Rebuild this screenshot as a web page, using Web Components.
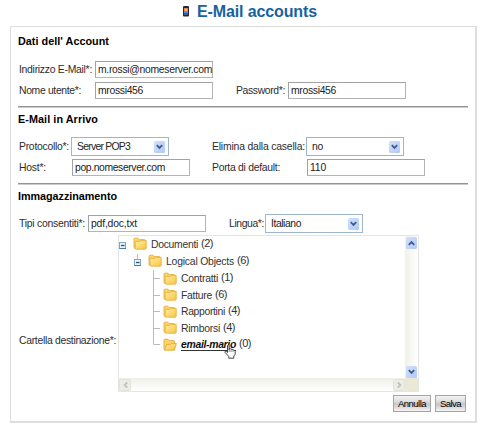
<!DOCTYPE html>
<html lang="it">
<head>
<meta charset="utf-8">
<title>E-Mail accounts</title>
<style>
html,body{margin:0;background:#fff}
body{width:499px;height:436px;overflow:hidden;font:10.4px/15px "Liberation Sans",Arial,sans-serif;color:#2c2c2c}
</style>
</head>
<body>
<mail-accounts></mail-accounts>
<script>
const define = (name, html, ready) => {
  const t = document.createElement('template');
  t.innerHTML = html;
  customElements.define(name, class extends HTMLElement {
    constructor() {
      super();
      this.attachShadow({mode: 'open'}).append(t.content.cloneNode(true));
    }
    connectedCallback() { if (ready) ready(this, this.shadowRoot); }
  });
};

/* A run of text whose tracking is adjusted so it spans "w" pixels. */
define('fit-text', `<style>:host{display:inline-block;white-space:pre}span{display:inline-block}</style><span><slot></slot></span>`,
  (el, root) => {
    const w = +el.getAttribute('w');
    const s = root.querySelector('span');
    s.style.letterSpacing = '0';
    const n = el.textContent.length;
    const gap = (w - s.getBoundingClientRect().width) / n;
    s.style.letterSpacing = gap.toFixed(3) + 'px';
  });

define('text-field', `<style>
:host{display:block;box-sizing:border-box;width:118px;height:17px;border:1px solid #b4b4b4;border-top-color:#a2a2a2;border-left-color:#a2a2a2;padding-left:2px;line-height:16px;background:#fff;color:#222;white-space:nowrap}
</style><slot></slot>`);

define('arrow-box', `<style>
:host{display:grid;place-items:center;box-sizing:border-box;width:11px;height:12px;border-radius:1.5px;background:linear-gradient(135deg,#d3e0fc,#b2c8f6);--ink:#3b5c8c}
:host([up]) svg{transform:rotate(180deg)}
:host([left]) svg{transform:rotate(90deg)}
:host([right]) svg{transform:rotate(-90deg)}
:host([off]){background:#eeede5;border:1px solid #e3e2da;--ink:#c2c1b8}
svg{display:block}
</style><svg width="7" height="6" viewBox="0 0 7 6"><path d="M.8 1.2 3.5 3.9 6.2 1.2" fill="none" stroke="var(--ink)" stroke-width="1.8"/></svg>`);

define('select-field', `<style>
:host{display:flex;align-items:center;justify-content:space-between;box-sizing:border-box;width:98px;height:19px;border:1px solid #9db6ca;padding:0 3px 0 5px;background:#fff;color:#222}
</style><slot></slot><arrow-box></arrow-box>`);

define('section-title', `<style>:host{display:block;font-weight:bold;font-size:10.8px;color:#000;height:14px;line-height:15px}</style><slot></slot>`);

define('rule-line', `<style>:host{display:block;width:450px;height:2px;box-sizing:border-box;border-top:1px solid #949494;border-bottom:1px solid #ccc}</style>`);

define('form-row', `<style>:host{display:grid;align-items:center;justify-content:start}</style><slot></slot>`,
  el => { el.style.gridTemplateColumns = el.getAttribute('cols'); });

define('push-button', `<style>
:host{display:grid;place-items:center;box-sizing:border-box;height:17px;border:1px solid #a5a5a5;background:linear-gradient(#f4f4f4 0,#dedede 35%,#c6c6c6 55%,#f4f4f4 100%);color:#000;font-size:9.5px;line-height:13px}
</style><slot></slot>`);

define('folder-icon', `<style>:host{display:block;width:14px;height:14px;margin-left:-1px}svg{display:block}
.open{display:none}:host([open]) .open{display:block}:host([open]) .shut{display:none}</style>
<svg width="14" height="14" viewBox="0 0 14 14">
<defs><linearGradient id="g" x2="1" y2="1"><stop offset="0" stop-color="#fff0a4"/><stop offset="1" stop-color="#f9c43f"/></linearGradient></defs>
<g class="shut" stroke="#e9b044" stroke-width=".9" stroke-linejoin="round"><path d="M1 10.8V2.2Q1 1.2 2 1.2H5L6.2 2.6H11Q12 2.6 12 3.6V11.5H2Z" fill="#fbd565"/><path d="M2.2 4.4H7L8 3.4H13.2V11Q13.2 12.2 12 12.2H3.2Q2.2 12.2 2.2 11.2Z" fill="url(#g)"/></g>
<g class="open" stroke="#e5a83a" stroke-width=".9" stroke-linejoin="round"><path d="M1 11.5V2.2Q1 1.2 2 1.2H5L6.2 2.6H10.5Q11.5 2.6 11.5 3.6V11.5Z" fill="#fbd565"/><path d="M3.6 6.4H7.5L8.5 5.4H13.4L11.4 12.2H1.5Z" fill="url(#g)"/></g>
</svg>`);

define('tree-toggle', `<style>:host{display:block}svg{display:block}path.s{display:none}:host([stem]) path.s{display:block}</style>
<svg width="8" height="14" viewBox="0 0 8 14"><path class="s" d="M3.5 0V6" stroke="#bbb"/><rect x=".5" y="5.5" width="6" height="6" fill="#e6f1fa" stroke="#7fa5c0"/><path d="M.5 11.5H7" stroke="#457ca5"/><path d="M2 8.5H5.5" stroke="#24557d" stroke-width="1.3"/></svg>`);

define('tree-branch', `<style>:host{display:block;align-self:stretch}svg{display:block}:host([last]) .full{display:none}</style>
<svg width="8" height="17" viewBox="0 0 8 17"><path class="full" d="M.5 8V17" stroke="#bbb"/><path d="M.5 0V8.5H7" fill="none" stroke="#bbb"/></svg>`);

define('tree-row', `<style>
:host{display:grid;grid-template-columns:15px 17px auto auto;align-items:center;height:17px;justify-content:start;color:#333}
::slotted([slot=n]){margin-left:3px;position:relative;top:-1px;font-size:11px}
</style><slot name="mark"></slot><slot name="icon"></slot><slot></slot><slot name="n"></slot>`);

define('hand-cursor', `<style>:host{position:absolute;left:105px;top:108px;width:13px;height:15px}svg{display:block}</style>
<svg width="13" height="15" viewBox="0 0 13 15"><path d="M3.5 8.5V1.6Q4.3.4 5.1 1.6V5.5 4.6Q6.2 3.8 6.9 5.2 8.2 4.5 8.9 6 10.5 5.4 11.2 7.2V10.2L9.8 12V14.2H4.8V12.5L.9 8.2Q.9 6.7 2.2 7.3Z" fill="#fff" stroke="#333" stroke-width=".9"/><path d="M5.2 5V8M7.1 5.4V8M9 6.2V8" stroke="#555" stroke-width=".7"/></svg>`);

define('folder-tree', `<style>
:host{display:grid;position:relative;box-sizing:border-box;width:301px;height:157px;border:1px solid #e4e6e4;grid-template:1fr 13px/1fr 13px;background:#fff}
.list{overflow:hidden}
.l1{margin-left:15px}.l2{margin-left:34px}
tree-row.leaf{grid-template-columns:11px 17px auto auto;height:16.5px}
.v{display:flex;flex-direction:column;justify-content:space-between;align-items:center;background:linear-gradient(90deg,#f1f1ea,#fff);padding:1px 0 0}
.h{display:flex;justify-content:space-between;align-items:center;background:linear-gradient(#f0f0e9,#fff)}
.c{background:#ebe8d8}
.h arrow-box{width:12px}
.sel{font-weight:bold;font-style:italic;color:#111;height:12px;line-height:13px;border-bottom:1px solid #333}
</style>
<div class="list">
<tree-row style="height:16px"><tree-toggle slot="mark"></tree-toggle><folder-icon slot="icon"></folder-icon><fit-text w="47">Documenti</fit-text><fit-text slot="n" w="12">(2)</fit-text></tree-row>
<tree-row class="l1" style="height:18px"><tree-toggle slot="mark" stem></tree-toggle><folder-icon slot="icon"></folder-icon><fit-text w="68">Logical Objects</fit-text><fit-text slot="n" w="12">(6)</fit-text></tree-row>
<div class="l2">
<tree-row class="leaf"><tree-branch slot="mark"></tree-branch><folder-icon slot="icon"></folder-icon><fit-text w="37">Contratti</fit-text><fit-text slot="n" w="12">(1)</fit-text></tree-row>
<tree-row class="leaf"><tree-branch slot="mark"></tree-branch><folder-icon slot="icon"></folder-icon><fit-text w="31">Fatture</fit-text><fit-text slot="n" w="12">(6)</fit-text></tree-row>
<tree-row class="leaf"><tree-branch slot="mark"></tree-branch><folder-icon slot="icon"></folder-icon><fit-text w="44">Rapportini</fit-text><fit-text slot="n" w="12">(4)</fit-text></tree-row>
<tree-row class="leaf"><tree-branch slot="mark"></tree-branch><folder-icon slot="icon"></folder-icon><fit-text w="39">Rimborsi</fit-text><fit-text slot="n" w="12">(4)</fit-text></tree-row>
<tree-row class="leaf"><tree-branch slot="mark" last></tree-branch><folder-icon slot="icon" open></folder-icon><fit-text class="sel" w="55">email-mario</fit-text><fit-text slot="n" w="12">(0)</fit-text></tree-row>
</div>
</div>
<div class="v"><arrow-box up></arrow-box><arrow-box></arrow-box></div>
<div class="h"><arrow-box left off></arrow-box><arrow-box right off></arrow-box></div>
<div class="c"></div>
<hand-cursor></hand-cursor>`);

define('page-heading', `<style>
:host{display:flex;height:26px;padding-left:183px;align-items:flex-start;box-sizing:border-box;color:#16639f;font-weight:bold;font-size:16px;line-height:18px}
svg{display:block;margin:6px 8px 0 0}fit-text{margin-top:3px}
</style><svg width="6" height="11" viewBox="0 0 6 11"><rect width="6" height="10.5" rx="1" fill="#2b2637"/><rect x="1" y="2" width="4" height="3" fill="#e88b42"/><rect x="2" y="3" width="2" height="2" fill="#ffc27a"/><rect x="1" y="5" width="4" height="2.5" fill="#4d8fe8"/><path d="M1 8.5H5" stroke="#4b5b86"/></svg><fit-text w="120">E-Mail accounts</fit-text>`);

define('mail-accounts', `<style>
:host{display:block;width:499px}
main{display:block;box-sizing:border-box;width:467px;height:397px;margin-left:10px;border:solid #dedede;border-width:1px 2px 2px 1px;padding:7px 0 0 7px}
.r{margin-left:1px}
footer{display:flex;justify-content:flex-end;gap:4px;padding:3px 9px 0 0}
</style>
<page-heading></page-heading>
<main>
<section-title><fit-text w="91">Dati dell' Account</fit-text></section-title>
<form-row class="r" style="height:17px;margin-top:13px" cols="76px 118px"><fit-text w="73">Indirizzo E-Mail*:</fit-text><text-field><fit-text w="114">m.rossi@nomeserver.com</fit-text></text-field></form-row>
<form-row class="r" style="height:17px;margin-top:4px" cols="76px 141px 52px 118px"><fit-text w="62">Nome utente*:</fit-text><text-field><fit-text w="45">mrossi456</fit-text></text-field><fit-text w="49">Password*:</fit-text><text-field><fit-text w="45">mrossi456</fit-text></text-field></form-row>
<rule-line style="margin-top:7px"></rule-line>
<section-title style="margin-top:4px"><fit-text w="80">E-Mail in Arrivo</fit-text></section-title>
<form-row class="r" style="height:19px;margin-top:11px" cols="52px 141px 94px 98px"><fit-text w="50">Protocollo*:</fit-text><select-field><fit-text w="53">Server POP3</fit-text></select-field><fit-text w="93">Elimina dalla casella:</fit-text><select-field><fit-text w="11">no</fit-text></select-field></form-row>
<form-row class="r" style="height:17px;margin-top:3px" cols="53px 140px 95px 118px"><fit-text w="27">Host*:</fit-text><text-field><fit-text w="90">pop.nomeserver.com</fit-text></text-field><fit-text w="68">Porta di default:</fit-text><text-field><fit-text w="16">110</fit-text></text-field></form-row>
<rule-line style="margin-top:7px"></rule-line>
<section-title style="margin-top:4px"><fit-text w="99">Immagazzinamento</fit-text></section-title>
<form-row class="r" style="height:19px;margin-top:11px" cols="69px 141px 36px 98px"><fit-text w="66">Tipi consentiti*:</fit-text><text-field><fit-text w="46">pdf,doc,txt</fit-text></text-field><fit-text w="35">Lingua*:</fit-text><select-field><fit-text w="30">Italiano</fit-text></select-field></form-row>
<form-row class="r" style="height:157px;margin-top:2px" cols="99px 301px"><fit-text w="97" style="padding-top:54px">Cartella destinazione*:</fit-text><folder-tree></folder-tree></form-row>
<footer><push-button style="width:38px"><fit-text w="28">Annulla</fit-text></push-button><push-button style="width:31px"><fit-text w="21">Salva</fit-text></push-button></footer>
</main>`);
</script>
</body>
</html>
